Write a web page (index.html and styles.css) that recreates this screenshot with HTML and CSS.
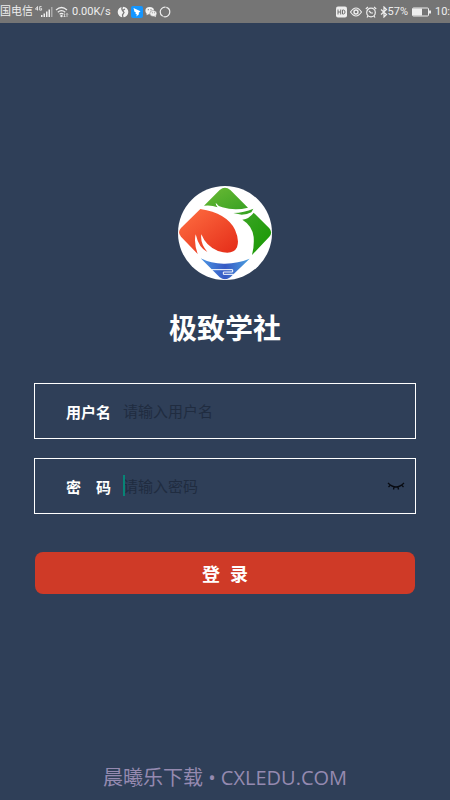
FILE: index.html
```html
<!DOCTYPE html>
<html lang="zh-CN">
<head>
<meta charset="utf-8">
<meta name="viewport" content="width=device-width, initial-scale=1">
<title>极致学社</title>
<link rel="stylesheet" href="styles.css">
</head>
<body>
<header class="status">
  <div class="status-group">
    <span>国电信</span>
    <svg class="signal" width="18" height="12" viewBox="0 0 18 12" aria-hidden="true">
      <g fill="none" stroke="#e8e8e8" stroke-width=".9"><path d="M2.5 4.500V.5L.4 3.200h2.800M6.600.6H4.700v3.500h1.900V2.500h-1"/></g>
      <path fill="#eee" d="M6 9h1.500v2H6zM8.500 7.500H10V11H8.500zM11 5.500h1.500V11H11zM13.500 3.500H15V11h-1.500z"/><path fill="#aaa" d="M16 1h1.500v10H16z"/>
    </svg>
    <svg class="wifi" width="14" height="12" viewBox="0 0 14 12" fill="none" stroke="#eee" stroke-width="1.200" aria-hidden="true">
      <path d="M1 4Q6.500-1 12 4M2.800 6.200q3.700-3.300 7.400 0M4.600 8.300q1.900-1.700 3.800 0"/><circle cx="6.500" cy="10" r=".6"/><path d="M9.500 7.500v3.500M12 7.500v3.500M8.500 10l1 1 1-1M11 8.500l1-1 1 1" stroke-width=".7"/>
    </svg>
    <span class="speed">0.00K/s</span>
    <svg width="12" height="12" viewBox="0 0 12 12" aria-hidden="true"><circle cx="6" cy="6" r="5.300" fill="#f2f2f2"/><path d="M6 0Q4 2 5.500 4.500L7 6.500 5.500 9 6 12M5.500 4.500L8 3" fill="none" stroke="#777" stroke-width="1.300"/></svg>
    <svg width="12" height="12" viewBox="0 0 12 12" aria-hidden="true"><rect width="12" height="12" rx="2" fill="#1596ff"/><path d="M2.500 2l7 3.300-2 1.700.7 1-2.800 2.500.4-2.300-1.500-.4.8-1.100-1.600-1z" fill="#fff"/></svg>
    <svg width="12" height="12" viewBox="0 0 12 12" aria-hidden="true"><g fill="#f2f2f2"><ellipse cx="4.700" cy="4.700" rx="4.300" ry="3.600"/><path d="M2 7l-.5 2.200L4 8z"/><ellipse cx="8.300" cy="7.500" rx="3.500" ry="3" stroke="#777" stroke-width=".5"/><path d="M9 10l2 1.300-.4-2.300z"/></g><g fill="#777"><circle cx="3.300" cy="3.700" r=".6"/><circle cx="6" cy="3.700" r=".6"/><circle cx="7.300" cy="6.800" r=".5"/><circle cx="9.400" cy="6.800" r=".5"/></g></svg>
    <svg width="12" height="12" viewBox="0 0 12 12" aria-hidden="true"><circle cx="6" cy="6" r="4.800" fill="none" stroke="#eee" stroke-width="1.200" stroke-dasharray="9 .7 13 .7"/></svg>
  </div>
  <div class="status-group status-right">
    <svg width="11" height="12" viewBox="0 0 11 12" aria-hidden="true"><rect y=".5" width="11" height="11" rx="2" fill="#eee"/><path d="M2 3.500v5M4.700 3.500v5M2 6h2.700M6.500 4v4h1Q9 8 9 6T7.500 4z" fill="none" stroke="#707070"/></svg>
    <svg width="12" height="12" viewBox="0 0 12 12" fill="none" stroke="#eee" aria-hidden="true"><path d="M.5 6Q6-2 11.500 6 6 14 .5 6z" stroke-width="1.200"/><circle cx="6" cy="6" r="2" stroke-width="1.400"/></svg>
    <svg width="12" height="12" viewBox="0 0 12 12" fill="none" stroke="#eee" stroke-width="1.200" aria-hidden="true"><circle cx="6" cy="6.500" r="4.300"/><path d="M.8 3L3 1M11.200 3L9 1M4 5l2 2h2M3 10l-1 1.500M9 10l1 1.500"/></svg>
    <svg class="bluetooth" width="8" height="12" viewBox="0 0 8 12" fill="none" stroke="#eee" stroke-width="1.200" aria-hidden="true"><path d="M1 3.500l5.500 5L4 11V1l2.500 2.500L1 8.500"/></svg>
    <span>57%</span>
    <svg class="battery" width="19" height="10" viewBox="0 0 19 10" aria-hidden="true"><rect x=".5" y="1" width="16" height="8" rx="1" fill="none" stroke="#eee"/><path d="M1 1.500h9v7H1zM17 3.500h2v3h-2z" fill="#eee"/></svg>
    <span>10:</span>
  </div>
</header>

<main class="login">
  <svg class="logo" viewBox="24 32 282 282" role="img" aria-label="极致学社">
    <defs>
      <linearGradient id="green" x1="0" y1="0" x2="1" y2="1"><stop offset="0" stop-color="#6cba35"/><stop offset="1" stop-color="#3aa223"/></linearGradient>
      <linearGradient id="deep" x1="0" y1="0" x2="1" y2="1"><stop offset="0" stop-color="#43a62c"/><stop offset="1" stop-color="#159800"/></linearGradient>
      <linearGradient id="red" x1="0" y1="0" x2="1" y2="1"><stop offset="0" stop-color="#ff7042"/><stop offset="1" stop-color="#e42b18"/></linearGradient>
      <linearGradient id="blue" x1="0" y1="0" x2="1" y2="0"><stop offset="0" stop-color="#4b96e3"/><stop offset=".5" stop-color="#3659c4"/><stop offset="1" stop-color="#4ba0df"/></linearGradient>
    </defs>
    <circle cx="165" cy="173" r="141" fill="#fff"/>
    <path fill="url(#green)" d="M102 91L149 44Q165 30 181 44L234 97Q195 107 157 96Q144 93 137 82Q137 91 143 96Q123 88 102 91z"/>
    <path fill="url(#deep)" d="M190 113Q223 112 250 100L244 111Q232 118 215 118zM217 133Q238 130 251 112L298 159Q309 172 298 184L246 239Q253 214 251 185Q247 151 217 133z"/>
    <path fill="url(#red)" d="M91 101L33 158Q21 171 33 184L83 236Q71 202 77 177Q87 219 112 230Q90 204 94 177Q108 213 144 227Q189 241 201 216Q209 194 195 163Q170 113 91 101z"/>
    <path fill="url(#blue)" d="M92 249Q125 266 165 265T239 250L181 306Q165 318 149 306z"/>
    <path d="M124 283H188V290H160V297H191" fill="none" stroke="#fff" stroke-width="3"/>
  </svg>
  <h1 class="title">极致学社</h1>

  <form class="form">
    <div class="field">
      <label class="label" for="user">用户名</label>
      <input class="input" id="user" type="text" placeholder="请输入用户名">
    </div>
    <div class="field">
      <label class="label" for="pass"><span>密</span><span>码</span></label>
      <div class="entry">
        <input class="input" id="pass" type="password" placeholder="请输入密码">
        <span class="caret"></span>
      </div>
      <button class="eye" type="button" aria-label="显示密码">
        <svg width="18" height="10" viewBox="0 0 18 10" fill="none" stroke="#080b12" stroke-width="1.300" aria-hidden="true"><path d="M1 2Q9 10 17 2M3.500 4L1.500 6M7 6L6.500 8.500M11 6l.5 2.500M14.500 4l2 2"/></svg>
      </button>
    </div>
    <button class="submit" type="submit"><span>登</span><span>录</span></button>
  </form>
</main>

<footer class="footer">晨曦乐下载 • CXLEDU.COM</footer>
</body>
</html>
```
FILE: styles.css
```css
* {
  box-sizing: border-box;
}

body {
  margin: 0;
  min-height: 100vh;
  display: flex;
  flex-direction: column;
  background: #2f3f58;
  color: #fff;
  font-family: "Noto Sans CJK SC", sans-serif;
}

.status {
  display: flex;
  justify-content: space-between;
  height: 23px;
  background: #757575;
  color: #eee;
  font-family: Roboto, "Noto Sans CJK SC", sans-serif;
  font-size: 11px;
  line-height: 23px;
  white-space: nowrap;
  overflow: hidden;
}

.status-group {
  display: flex;
  align-items: center;
  gap: 2px;
}

.status-right {
  gap: 3px;
}

.status svg {
  flex: none;
}

.speed {
  margin: 0 4px 0 1px;
}

.bluetooth {
  margin-right: -3px;
}

.battery {
  margin: 0 1px;
}

.login {
  flex: 1;
  display: flex;
  flex-direction: column;
  align-items: center;
  padding: 163px 34px 0;
}

.logo {
  width: 94px;
  height: 94px;
}

.title {
  margin: 27px 0 36px;
  font-size: 28px;
  line-height: 40px;
  font-weight: 700;
}

.form {
  width: 100%;
  display: flex;
  flex-direction: column;
  gap: 19px;
}

.field {
  display: flex;
  align-items: center;
  height: 56px;
  padding: 0 10px 0 31px;
  border: 1px solid #fff;
}

.label {
  display: flex;
  justify-content: space-between;
  flex: none;
  width: 45px;
  margin-right: 12px;
  padding-top: 2px;
  font-size: 15px;
  line-height: 22px;
  font-weight: 700;
}

.entry {
  position: relative;
  display: flex;
  flex: 1;
}

.input {
  flex: 1;
  min-width: 0;
  width: 100%;
  height: 24px;
  padding: 0;
  border: 0;
  outline: 0;
  background: transparent;
  color: #fff;
  font: inherit;
  font-size: 15px;
  line-height: 24px;
}

.input::placeholder {
  color: #202c40;
  opacity: 1;
}

.caret {
  position: absolute;
  left: 0;
  top: 1px;
  width: 2px;
  height: 21px;
  background: #078476;
}

.eye {
  display: flex;
  padding: 0;
  border: 0;
  background: transparent;
}

.submit {
  display: flex;
  justify-content: center;
  gap: 10px;
  margin: 19px 1px 0;
  padding: 7px 0;
  border: 0;
  border-radius: 8px;
  background: #cf3a27;
  color: #fff;
  font: inherit;
  font-size: 18px;
  line-height: 28px;
  font-weight: 700;
}

.footer {
  padding-bottom: 8px;
  color: #958ab0;
  font-family: "Open Sans", "Noto Sans CJK SC", sans-serif;
  font-size: 20px;
  line-height: 28px;
  text-align: center;
}
```
